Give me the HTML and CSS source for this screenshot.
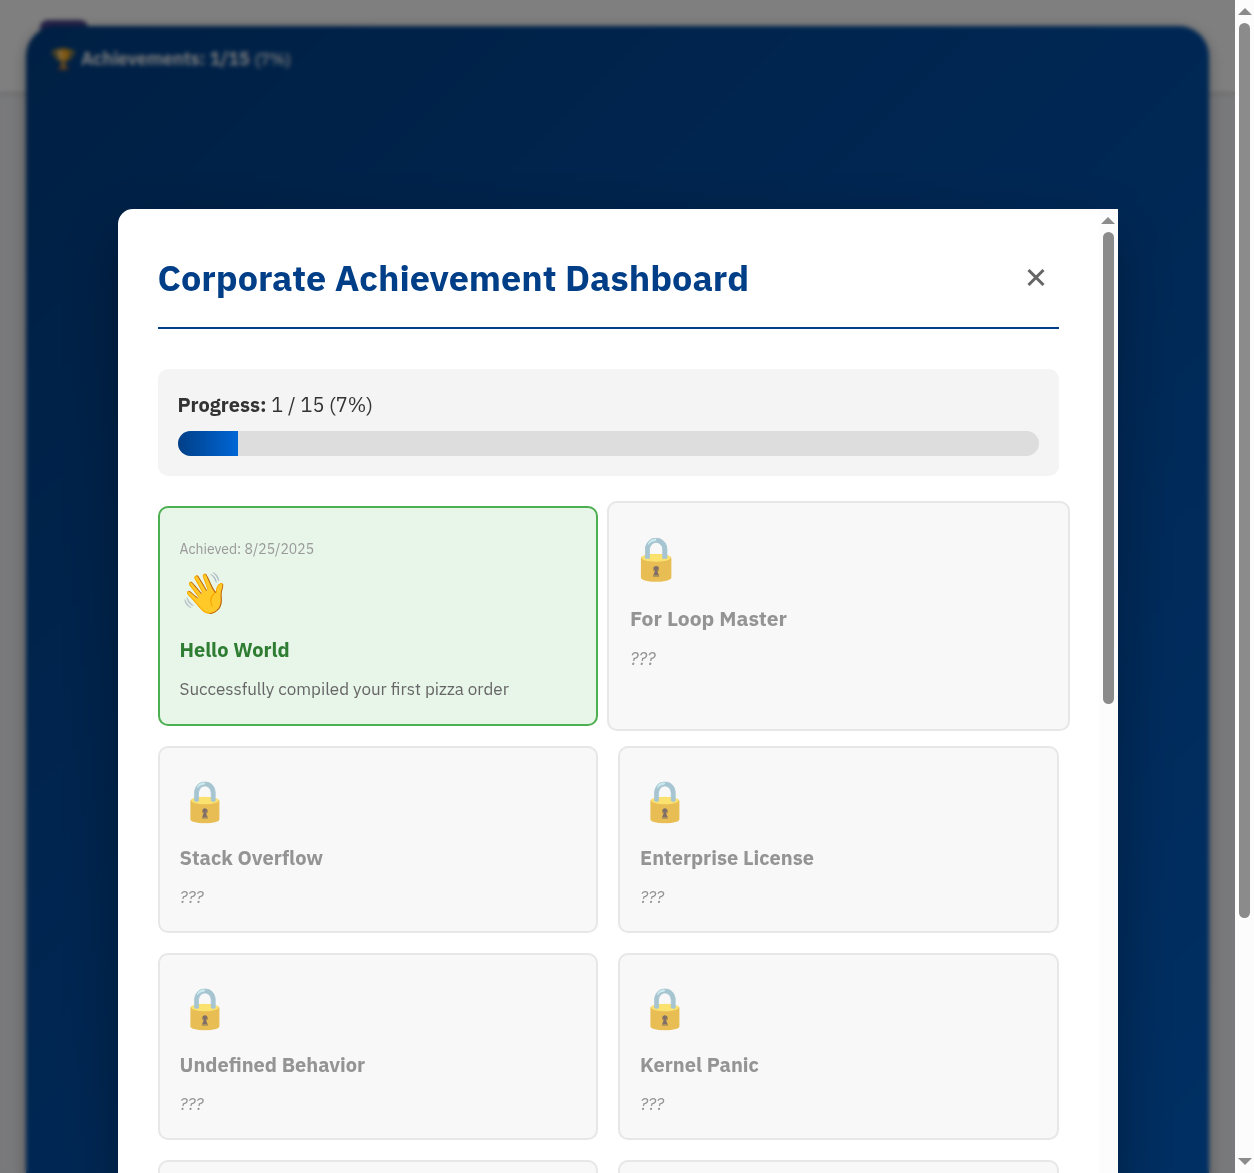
FILE: index.html
```
<!DOCTYPE html>
<html lang="en">
<head>
<meta charset="utf-8">
<meta name="viewport" content="width=device-width, initial-scale=1">
<title>Corporate Achievement Dashboard</title>
<link rel="stylesheet" href="styles.css">
</head>
<body>
<div class="app">
  <div class="viewport">
    <div class="site-header"><span class="site-logo"></span></div>
    <aside class="tracker">
      <span class="tracker-icon">🏆</span>
      <strong class="tracker-label">Achievements: 1/15</strong>
      <span class="tracker-percent">(7%)</span>
    </aside>
    <div class="overlay">
      <section class="modal" role="dialog" aria-labelledby="dialog-title">
        <div class="modal-body">
          <header class="modal-header">
            <h1 class="modal-title" id="dialog-title">Corporate Achievement Dashboard</h1>
            <button class="close" type="button" aria-label="Close">
              <svg width="18" height="18" viewBox="0 0 18 18" aria-hidden="true"><path d="M1.5 1 16.5 16M16.5 1 1.5 16" fill="none" stroke="currentColor" stroke-width="3"/></svg>
            </button>
          </header>
          <div class="summary">
            <label class="summary-label" for="progress"><strong>Progress:</strong> 1 / 15 (7%)</label>
            <progress class="bar" id="progress" value="7" max="100"></progress>
          </div>
          <div class="cards">
            <article class="card card-unlocked">
              <p class="card-date">Achieved: 8/25/2025</p>
              <div class="card-icon">👋</div>
              <h2 class="card-title">Hello World</h2>
              <p class="card-text">Successfully compiled your first pizza order</p>
            </article>
            <article class="card card-locked card-raised">
              <div class="card-icon">🔒</div>
              <h2 class="card-title">For Loop Master</h2>
              <p class="card-text">???</p>
            </article>
            <article class="card card-locked">
              <div class="card-icon">🔒</div>
              <h2 class="card-title">Stack Overflow</h2>
              <p class="card-text">???</p>
            </article>
            <article class="card card-locked">
              <div class="card-icon">🔒</div>
              <h2 class="card-title">Enterprise License</h2>
              <p class="card-text">???</p>
            </article>
            <article class="card card-locked">
              <div class="card-icon">🔒</div>
              <h2 class="card-title">Undefined Behavior</h2>
              <p class="card-text">???</p>
            </article>
            <article class="card card-locked">
              <div class="card-icon">🔒</div>
              <h2 class="card-title">Kernel Panic</h2>
              <p class="card-text">???</p>
            </article>
            <article class="card card-locked card-empty"></article>
            <article class="card card-locked card-empty"></article>
          </div>
        </div>
        <div class="scrollbar modal-scrollbar" aria-hidden="true">
          <span class="arrow arrow-up"></span>
          <span class="thumb"></span>
        </div>
      </section>
    </div>
  </div>
  <div class="scrollbar page-scrollbar" aria-hidden="true">
    <span class="arrow arrow-up"></span>
    <span class="thumb"></span>
    <span class="arrow arrow-down"></span>
  </div>
</div>
</body>
</html>
```
FILE: styles.css
```
* { box-sizing: border-box; }

body {
  margin: 0;
  color: #333;
  font-family: "IBM Plex Sans", Roboto, "Noto Sans", sans-serif;
  font-size: 20px;
  line-height: 32px;
}

h1, h2, p { margin: 0; }

.app {
  display: flex;
  height: 100vh;
  overflow: hidden;
}

.viewport {
  position: relative;
  flex: 1;
  overflow: hidden;
  background: #f2f3f6;
}

/* Page behind the dialog */
.site-header {
  height: 92px;
  padding: 20px 40px;
  background: #fff;
  box-shadow: 0 2px 4px rgba(0, 0, 0, 0.15);
}

.site-logo {
  display: block;
  width: 48px;
  height: 48px;
  border-radius: 8px;
  background: #4a4490;
}

.tracker {
  position: absolute;
  inset: 26px 26px -500px;
  display: flex;
  align-items: flex-start;
  gap: 5px;
  padding: 20px 25px;
  border-radius: 30px;
  background: linear-gradient(135deg, #003f87, #0066d6);
  box-shadow: 0 4px 15px rgba(0, 0, 0, 0.3);
  color: #fff;
  font-size: 18px;
  line-height: 26px;
}

.tracker-icon { font-size: 20px; }

.tracker-label { font-weight: 600; }

.tracker-percent {
  font-size: 16px;
  font-weight: 600;
  opacity: 0.8;
}

/* Dialog */
.overlay {
  position: absolute;
  inset: 0;
  display: flex;
  justify-content: center;
  align-items: flex-start;
  padding: 209px 20px 0;
  background: rgba(0, 0, 0, 0.5);
  backdrop-filter: blur(2px);
}

.modal {
  display: flex;
  width: 100%;
  max-width: 1000px;
  overflow: hidden;
  border-radius: 15px 0 0 0;
  background: #fff;
  box-shadow: 0 20px 60px rgba(0, 0, 0, 0.3);
}

.modal-body {
  flex: 1;
  padding: 40px;
}

.modal-header {
  display: flex;
  justify-content: space-between;
  align-items: center;
  margin-bottom: 40px;
  padding-bottom: 20px;
  border-bottom: 2px solid #003f87;
}

.modal-title {
  color: #003f87;
  font-size: 36px;
  font-weight: 700;
  line-height: 58px;
}

.close {
  display: flex;
  padding: 14px;
  border: 0;
  background: none;
  color: #666;
  cursor: pointer;
}

.summary {
  display: flex;
  flex-direction: column;
  gap: 10px;
  margin-bottom: 30px;
  padding: 20px;
  border-radius: 10px;
  background: #f4f4f4;
}

.bar {
  appearance: none;
  display: block;
  width: 100%;
  height: 25px;
  overflow: hidden;
  border: 0;
  border-radius: 13px;
  background: #ddd;
}

.bar::-webkit-progress-bar { background: #ddd; }

.bar::-webkit-progress-value { background: linear-gradient(90deg, #003f87, #0066d6); }

/* Achievement cards */
.cards {
  display: grid;
  grid-template-columns: 1fr 1fr;
  gap: 20px;
}

.card {
  padding: 20px;
  border: 2px solid #ddd;
  border-radius: 10px;
}

.card-unlocked {
  min-height: 220px;
  border-color: #4caf50;
  background: #e8f5e9;
}

.card-locked {
  border-color: #e7e7e7;
  background: #f8f8f8;
}

.card-date {
  margin-top: 10px;
  color: #999;
  font-size: 14px;
  line-height: 22px;
}

.card-icon {
  margin-bottom: 10px;
  font-size: 40px;
  line-height: 64px;
}

.card-title {
  font-size: 20px;
  font-weight: 700;
  line-height: 32px;
}

.card-text {
  margin-top: 10px;
  color: #666;
  font-size: 17px;
  line-height: 27px;
}

.card-unlocked .card-title { color: #2e7d32; }

.card-locked .card-icon { opacity: 0.7; }

.card-locked .card-title { color: #949494; }

.card-locked .card-text {
  color: #949494;
  font-style: italic;
}

.card-raised {
  margin: -5px -11px;
  padding: 21px;
}

.card-raised .card-icon {
  font-size: 42px;
  line-height: 67px;
}

.card-raised .card-title {
  font-size: 21px;
  line-height: 34px;
}

.card-raised .card-text {
  font-size: 18px;
  line-height: 28px;
}

.card-empty { height: 187px; }

/* Scrollbars */
.scrollbar {
  display: flex;
  flex-direction: column;
  align-items: center;
  width: 19px;
  padding: 8px 0;
  gap: 8px;
  background: #fcfcfc;
}

.arrow {
  border: 7px solid transparent;
}

.arrow-up {
  border-top: 0;
  border-bottom-color: #8b8b8b;
}

.arrow-down {
  margin-top: auto;
  border-bottom: 0;
  border-top-color: #8b8b8b;
}

.thumb {
  width: 11px;
  border-radius: 6px;
  background: #8b8b8b;
}

.modal-scrollbar .thumb { height: 472px; }

.page-scrollbar .thumb { height: 895px; }
```
